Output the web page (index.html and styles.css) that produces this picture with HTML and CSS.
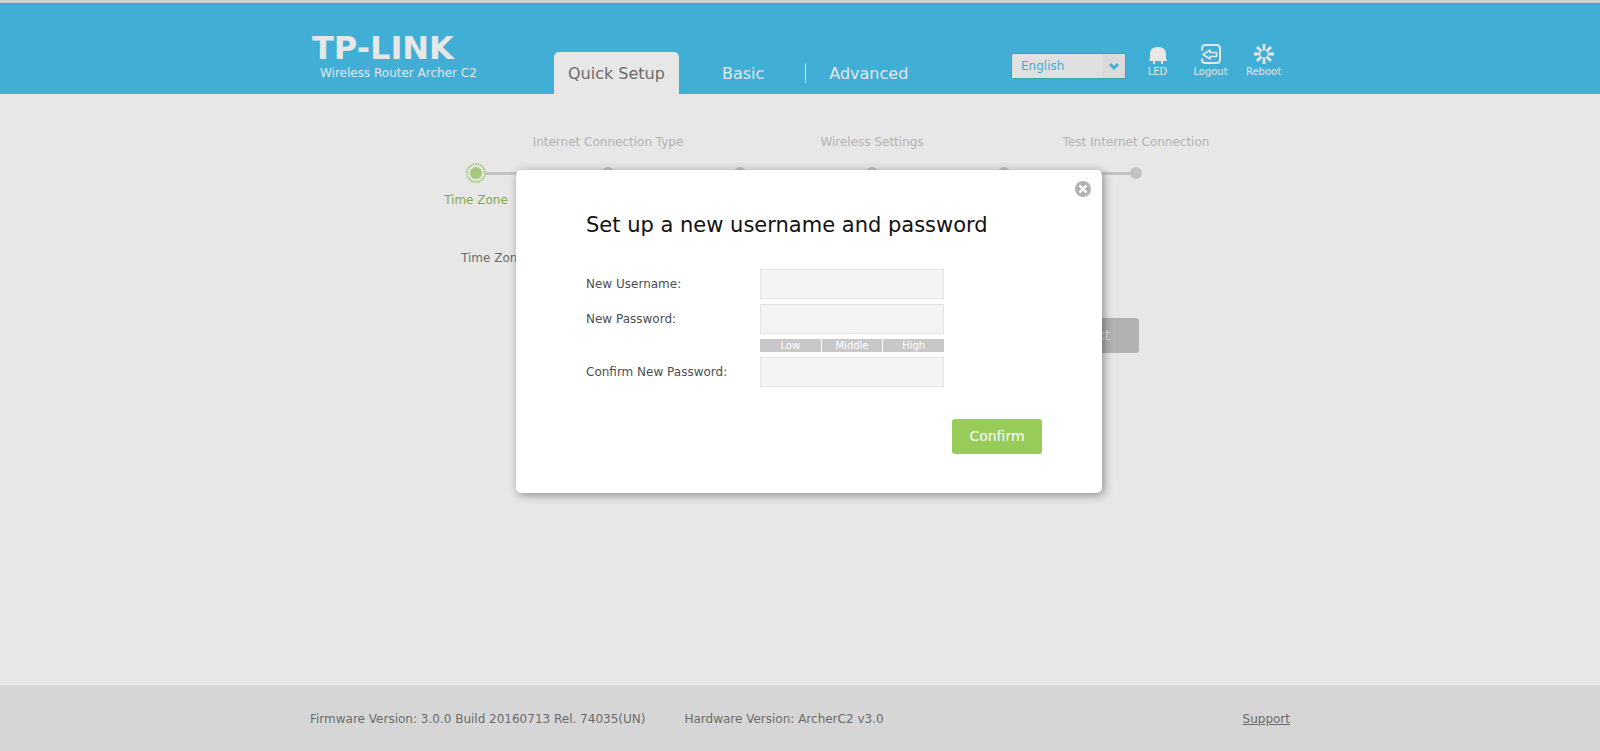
FILE: index.html
```html
<!DOCTYPE html>
<html lang="en">
<head>
<meta charset="utf-8">
<title>TP-LINK</title>
<link rel="stylesheet" href="styles.css">
</head>
<body>
<header class="header">
  <div class="wrap header-row">
    <div class="brand">
      <div class="logo">TP-LINK</div>
      <div class="model">Wireless Router Archer C2</div>
    </div>
    <nav class="tabs">
      <a class="tab tab-active" href="#quick">Quick Setup</a>
      <a class="tab" href="#basic">Basic</a>
      <span class="tab-sep"></span>
      <a class="tab" href="#advanced">Advanced</a>
    </nav>
    <div class="tools">
      <div class="lang">
        <select class="lang-select" aria-label="Language"><option>English</option></select>
        <svg class="lang-arrow" viewBox="0 0 24 24" width="24" height="24"><path d="M8 11l4 4 4-4" fill="none" stroke="#41aed6" stroke-width="3"/></svg>
      </div>
      <button class="tool" type="button">
        <svg width="20" height="20" viewBox="0 0 20 20" fill="#e7e7e7"><path d="M2 15V10C2 5.500 5 3 10 3s8 2.500 8 7v5l1 1v1H1v-1zM5 17h2v3H5zM13 17h2v3h-2z"/></svg>
        <span>LED</span>
      </button>
      <button class="tool" type="button">
        <svg width="20" height="20" viewBox="0 0 20 20" fill="none" stroke="#e7e7e7" stroke-width="2"><path d="M1 6.500V4.500Q1 1 4.500 1H15.500Q19 1 19 4.500V15.500Q19 19 15.500 19H4.500Q1 19 1 15.500V14.500"/><path d="M2 10.500L9 6V8.500h6.500v4H9V15z" stroke-width="1.600" stroke-linejoin="round"/></svg>
        <span>Logout</span>
      </button>
      <button class="tool" type="button">
        <svg width="20" height="20" viewBox="0 0 20 20" fill="none" stroke="#e7e7e7" stroke-width="2.800"><path d="M10 0v6.500M10 13.500V20M0 10h6.500M13.500 10H20M3 3l4.500 4.500M12.500 12.500L17 17M17 3l-4.500 4.500M7.500 12.500L3 17"/></svg>
        <span>Reboot</span>
      </button>
    </div>
  </div>
</header>

<main class="wrap main">
  <ol class="steps">
    <li class="step step-current"><span class="step-top"></span><span class="dot">
      <svg width="20" height="20" viewBox="0 0 20 20"><circle cx="10" cy="10" r="10" fill="#e7e7e7"/><circle cx="10" cy="10" r="9" fill="none" stroke="#a2c878" stroke-width="2" stroke-dasharray="1.600 0.970"/><circle cx="10" cy="10" r="6" fill="#a2c878"/></svg>
    </span><span class="step-bottom">Time Zone</span></li>
    <li class="step"><span class="step-top">Internet Connection Type</span><span class="dot"><i class="dot-small"></i></span></li>
    <li class="step"><span class="step-top"></span><span class="dot"><i class="dot-small"></i></span></li>
    <li class="step"><span class="step-top">Wireless Settings</span><span class="dot"><i class="dot-small"></i></span></li>
    <li class="step"><span class="step-top"></span><span class="dot"><i class="dot-small"></i></span></li>
    <li class="step"><span class="step-top">Test Internet Connection</span><span class="dot"><i class="dot-small"></i></span></li>
  </ol>
  <div class="zone-row">
    <label for="zone">Time Zone:</label>
    <select class="zone-select" id="zone"></select>
  </div>
  <div class="next-row"><button class="btn btn-next" type="button">Next</button></div>
</main>

<footer class="footer">
  <div class="wrap footer-row">
    <span>Firmware Version: 3.0.0 Build 20160713 Rel. 74035(UN)</span>
    <span>Hardware Version: ArcherC2 v3.0</span>
    <a class="support" href="#support">Support</a>
  </div>
</footer>

<form class="modal" role="dialog" aria-labelledby="modal-title">
  <button class="close" type="button" aria-label="Close">
    <svg width="16" height="16" viewBox="0 0 16 16"><circle cx="8" cy="8" r="8" fill="#b2b2b2"/><path d="M4.500 4.500l7 7M11.500 4.500l-7 7" stroke="#fff" stroke-width="2.400"/></svg>
  </button>
  <h1 class="modal-title" id="modal-title">Set up a new username and password</h1>
  <div class="fields">
    <label for="user">New Username:</label>
    <input class="field" id="user" type="text">
    <label for="pass">New Password:</label>
    <input class="field" id="pass" type="password">
    <div class="strength"><span>Low</span><span>Middle</span><span>High</span></div>
    <label for="pass2">Confirm New Password:</label>
    <input class="field" id="pass2" type="password">
  </div>
  <div class="actions"><button class="btn btn-confirm" type="button">Confirm</button></div>
</form>
</body>
</html>
```
FILE: styles.css
```css
* { box-sizing: border-box; }

body {
  margin: 0;
  min-height: 100vh;
  display: flex;
  flex-direction: column;
  position: relative;
  background: #e7e7e7;
  color: #6b6b6b;
  font: 12px/16px "DejaVu Sans", sans-serif;
}

button, input, select { font: inherit; }
button { border: 0; cursor: pointer; }

.wrap {
  width: 100%;
  max-width: 980px;
  margin: 0 auto;
}

/* header */
.header {
  background: #41aed6;
  border-top: 3px solid #d0d0d0;
  box-shadow: inset 0 1px #7d8e95;
}
.header-row {
  display: flex;
  height: 91px;
}
.brand {
  width: 244px;
  padding-top: 34px;
  color: #e7e7e7;
}
.logo {
  padding-left: 2px;
  font-size: 32px;
  font-weight: bold;
  line-height: 22px;
}
.model {
  padding: 6px 0 0 10px;
}
.tabs {
  display: flex;
  align-items: flex-end;
  font-size: 16px;
}
.tab {
  height: 42px;
  padding: 0 23px;
  line-height: 44px;
  color: #e7e7e7;
  text-decoration: none;
}
.tab-active {
  padding: 0 14px;
  margin-right: 20px;
  border-radius: 5px 5px 0 0;
  background: #e7e7e7;
  color: #6b6b6b;
}
.tab-sep {
  width: 1px;
  height: 20px;
  margin: 0 0 11px 18px;
  background: #e7e7e7;
}
.tools {
  display: flex;
  align-items: flex-start;
  margin-left: auto;
  padding-top: 41px;
}
.lang {
  position: relative;
  margin: 9px 5px 0 0;
}
.lang-select {
  display: block;
  appearance: none;
  width: 115px;
  height: 26px;
  padding: 0 28px 1px 9px;
  border: 1px solid #36a3ad;
  border-radius: 0;
  background: linear-gradient(#dadada, #dadada) right / 23px 100% no-repeat #e0e0e0;
  color: #41aed6;
}
.lang-arrow {
  position: absolute;
  right: 0;
  top: 0;
  pointer-events: none;
}
.tool {
  display: flex;
  flex-direction: column;
  align-items: center;
  width: 53px;
  padding: 0;
  background: none;
  color: #e7e7e7;
  font-size: 10px;
  line-height: 16px;
}

/* wizard */
.main {
  flex: 1;
  padding: 40px 151px 0 100px;
}
.steps {
  display: flex;
  width: 792px;
  margin: 0;
  padding: 0;
  list-style: none;
  color: #b2b2b2;
}
.step {
  display: flex;
  flex: 1;
  min-width: 0;
  flex-direction: column;
  align-items: center;
  white-space: nowrap;
}
.step-top { height: 29px; }
.dot {
  display: flex;
  justify-content: center;
  align-items: center;
  width: 100%;
  height: 20px;
  background: linear-gradient(#c2c2c2, #c2c2c2) center / 100% 3px no-repeat;
}
.step:first-child .dot { background-position: right; background-size: 50% 3px; }
.step:last-child .dot { background-position: left; background-size: 50% 3px; }
.dot-small {
  width: 12px;
  height: 12px;
  border-radius: 50%;
  background: #c2c2c2;
}
.step-bottom {
  padding-top: 9px;
  color: #80aa47;
}
.zone-row {
  display: flex;
  align-items: center;
  gap: 100px;
  padding: 35px 0 0 51px;
}
.zone-select {
  width: 184px;
  height: 30px;
}
.next-row {
  display: flex;
  justify-content: flex-end;
  padding-top: 45px;
}
.btn {
  width: 90px;
  height: 35px;
  padding: 0 0 2px;
  border-radius: 3px;
  font-size: 14px;
}
.btn-next {
  background: #b2b2b2;
  color: #e0e0e0;
}

/* footer */
.footer {
  background: #d6d6d6;
}
.footer-row {
  display: flex;
  gap: 39px;
  padding: 26px 0 24px;
}
.support {
  margin-left: auto;
  color: inherit;
}

/* dialog */
.modal {
  position: absolute;
  top: 170px;
  left: calc(50% - 284px);
  width: 586px;
  padding: 40px 60px 39px 70px;
  border-radius: 5px;
  background: #fff;
  box-shadow: 2px 2px 10px rgba(0, 0, 0, 0.4);
  color: #4d4d4d;
}
.close {
  position: absolute;
  top: 11px;
  right: 11px;
  width: 16px;
  height: 16px;
  padding: 0;
  background: none;
}
.close svg { display: block; }
.modal-title {
  margin: 0 0 29px;
  color: #111;
  font-size: 21px;
  font-weight: normal;
  line-height: 30px;
}
.fields {
  display: grid;
  grid-template-columns: 174px 184px;
  row-gap: 5px;
  align-items: center;
}
.field {
  width: 100%;
  height: 30px;
  padding: 0 8px;
  border: 1px solid #e4e4e4;
  background: #f4f4f4;
}
.strength {
  grid-column: 2;
  display: grid;
  grid-template-columns: repeat(3, 1fr);
  gap: 1px;
  color: #fff;
  font-size: 10px;
  line-height: 13px;
  text-align: center;
}
.strength span { background: #c8c8c8; }
.actions {
  display: flex;
  justify-content: flex-end;
  padding-top: 32px;
}
.btn-confirm {
  background: #98cc58;
  color: #fff;
}
```
